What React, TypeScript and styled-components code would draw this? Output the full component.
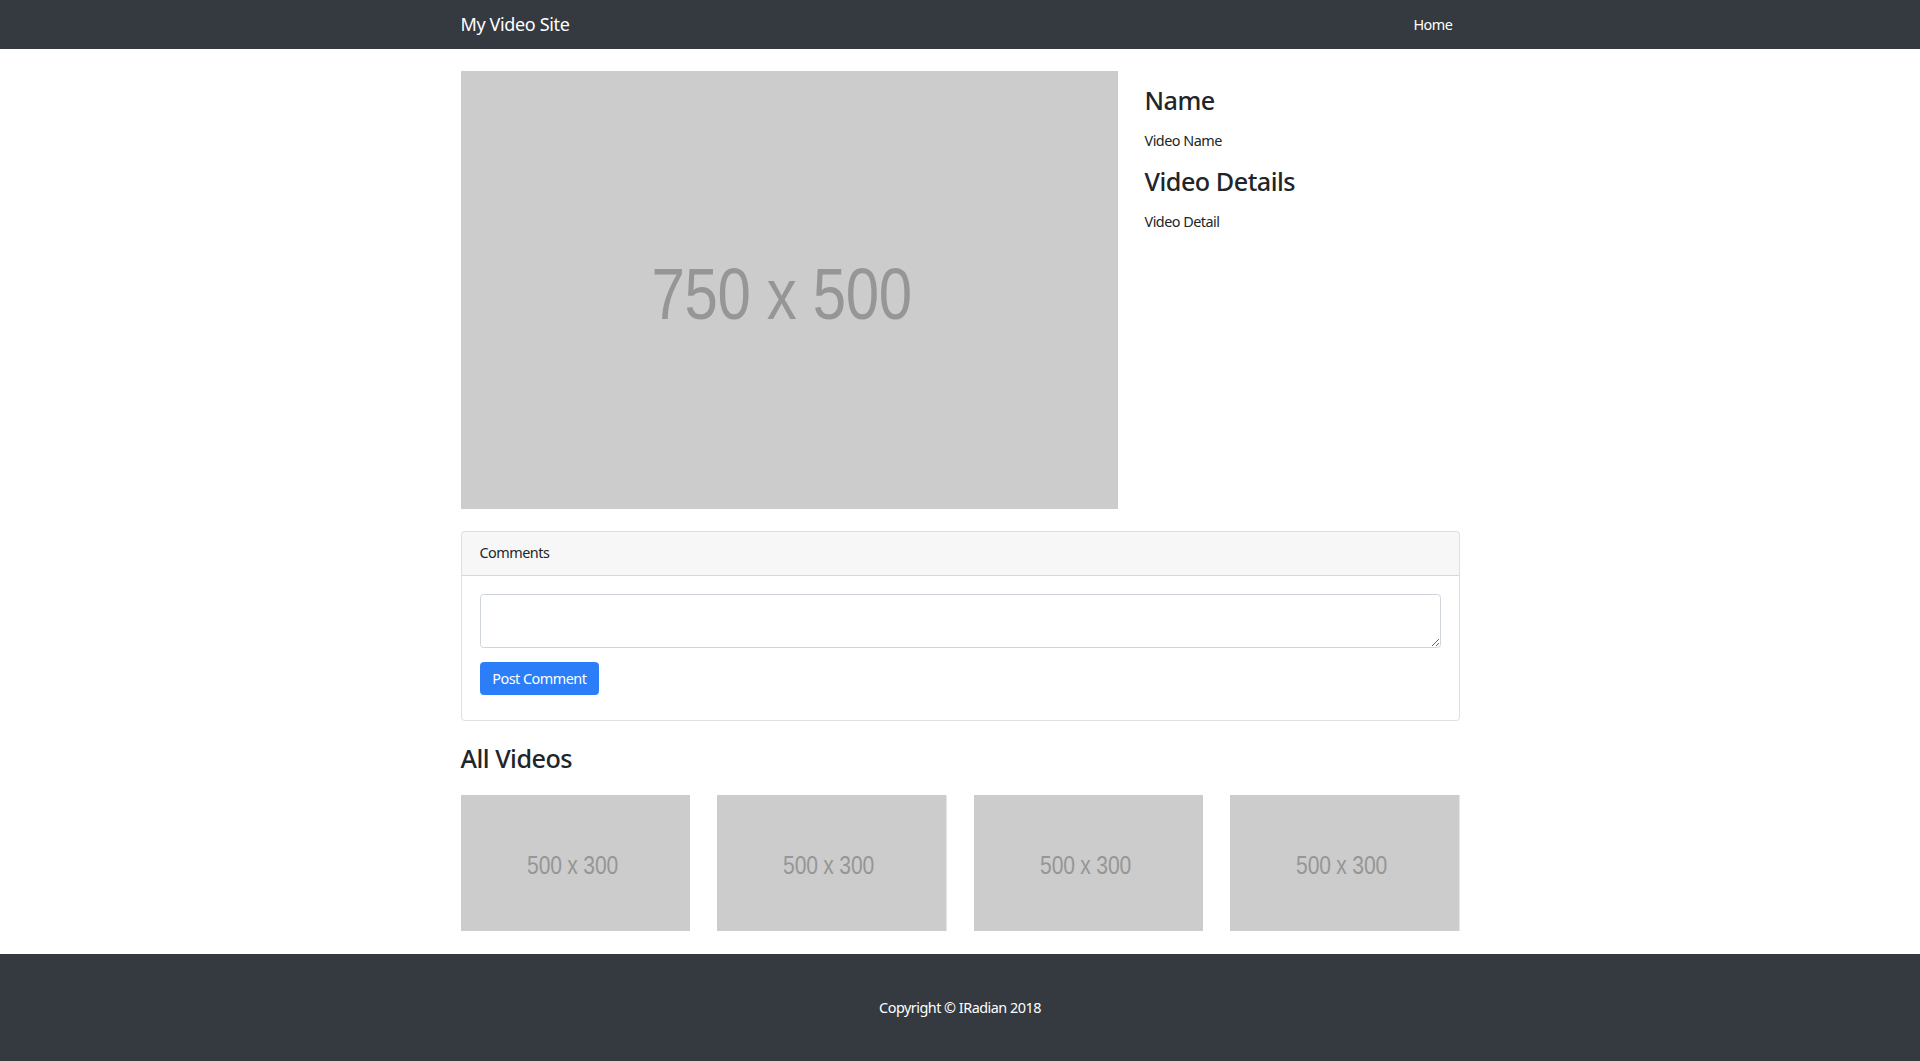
import React from "react";
import styled, { createGlobalStyle } from "styled-components";

const GlobalStyle = createGlobalStyle`
  html, body { margin: 0; padding: 0; background: #fff; }
  body {
    font-family: "Segoe UI", "Noto Sans", "Open Sans", Arial, sans-serif;
    font-size: 14.4px;
    line-height: 1.5;
    letter-spacing: -0.035em;
    color: #212529;
  }
  * { box-sizing: border-box; }
`;

const Navbar = styled.nav`
  background: #343a40;
  height: 49px;
`;

const Container = styled.div`
  width: 999px;
  margin: 0 auto;
`;

const NavInner = styled(Container)`
  height: 100%;
  display: flex;
  align-items: center;
  justify-content: space-between;
`;

const Brand = styled.a`
  color: #fff;
  font-size: 18px;
  line-height: 27px;
  letter-spacing: -0.02em;
  text-decoration: none;
`;

const NavLink = styled.a`
  color: #fff;
  font-size: 14.4px;
  padding: 0 7.2px;
  text-decoration: none;
`;

const Row = styled.div`
  display: flex;
  gap: 27px;
  margin-top: 22px;
`;

const MainCol = styled.div`
  width: 657px;
  flex: none;
`;

const SideCol = styled.div`
  width: 315px;
  flex: none;
`;

const Heading = styled.h3`
  font-size: 25.2px;
  font-weight: 500;
  line-height: 1.2;
  letter-spacing: -0.02em;
  margin: 14.4px 0;
`;

const SectionHeading = styled(Heading)`
  margin: 21.6px 0;
`;

const Text = styled.p`
  margin: 0 0 14.4px;
`;

const Placeholder = styled.svg`
  display: block;
  width: 100%;
  height: auto;
`;

const Card = styled.div`
  margin-top: 21.6px;
  border: 1px solid rgba(0, 0, 0, 0.125);
  border-radius: 3.6px;
  overflow: hidden;
`;

const CardHeader = styled.div`
  padding: 10.8px 18px;
  background: rgba(0, 0, 0, 0.03);
  border-bottom: 1px solid rgba(0, 0, 0, 0.125);
  line-height: 21.6px;
`;

const CardBody = styled.div`
  padding: 18px 18px 25px;
`;

const TextArea = styled.textarea`
  display: block;
  width: 100%;
  height: 54px;
  margin: 0 0 14.4px;
  padding: 5.4px 10.8px;
  border: 1px solid #ced4da;
  border-radius: 3.6px;
  font: inherit;
  color: #495057;
`;

const Button = styled.button`
  display: inline-block;
  height: 33px;
  padding: 0 11.8px;
  border: 1px solid #2b7ef8;
  border-radius: 3.6px;
  background: #2b7ef8;
  color: #fff;
  font: inherit;
  letter-spacing: inherit;
  line-height: 31px;
  cursor: pointer;
`;

const ThumbGrid = styled.div`
  display: grid;
  grid-template-columns: repeat(4, 229.5px);
  gap: 27px;
  margin-bottom: 22.6px;
`;

const Footer = styled.footer`
  background: #343a40;
  padding: 43.2px 0;
  text-align: center;
  color: #fff;
  line-height: 21.6px;
`;

const MainImage = () => (
  <Placeholder viewBox="0 0 750 500">
    <rect width="750" height="500" fill="#cccccc" />
    <text
      x="366"
      y="283"
      fontSize="82"
      fill="#969696"
      textAnchor="middle"
      textLength="297"
      lengthAdjust="spacingAndGlyphs"
      fontFamily="'Liberation Sans', Arial, sans-serif"
    >
      750 x 500
    </text>
  </Placeholder>
);

const Thumb = () => (
  <Placeholder viewBox="0 0 500 298">
    <rect width="500" height="298" fill="#cccccc" />
    <text
      x="243"
      y="173"
      fontSize="58"
      fill="#969696"
      textAnchor="middle"
      textLength="198"
      lengthAdjust="spacingAndGlyphs"
      fontFamily="'Liberation Sans', Arial, sans-serif"
    >
      500 x 300
    </text>
  </Placeholder>
);

export default function App() {
  return (
    <>
      <GlobalStyle />
      <Navbar>
        <NavInner>
          <Brand href="#">My Video Site</Brand>
          <NavLink href="#">Home</NavLink>
        </NavInner>
      </Navbar>
      <Container>
        <Row>
          <MainCol>
            <MainImage />
          </MainCol>
          <SideCol>
            <Heading>Name</Heading>
            <Text>Video Name</Text>
            <Heading>Video Details</Heading>
            <Text>Video Detail</Text>
          </SideCol>
        </Row>
        <Card>
          <CardHeader>Comments</CardHeader>
          <CardBody>
            <TextArea />
            <Button>Post Comment</Button>
          </CardBody>
        </Card>
        <SectionHeading>All Videos</SectionHeading>
        <ThumbGrid>
          <Thumb />
          <Thumb />
          <Thumb />
          <Thumb />
        </ThumbGrid>
      </Container>
      <Footer>Copyright © IRadian 2018</Footer>
    </>
  );
}
